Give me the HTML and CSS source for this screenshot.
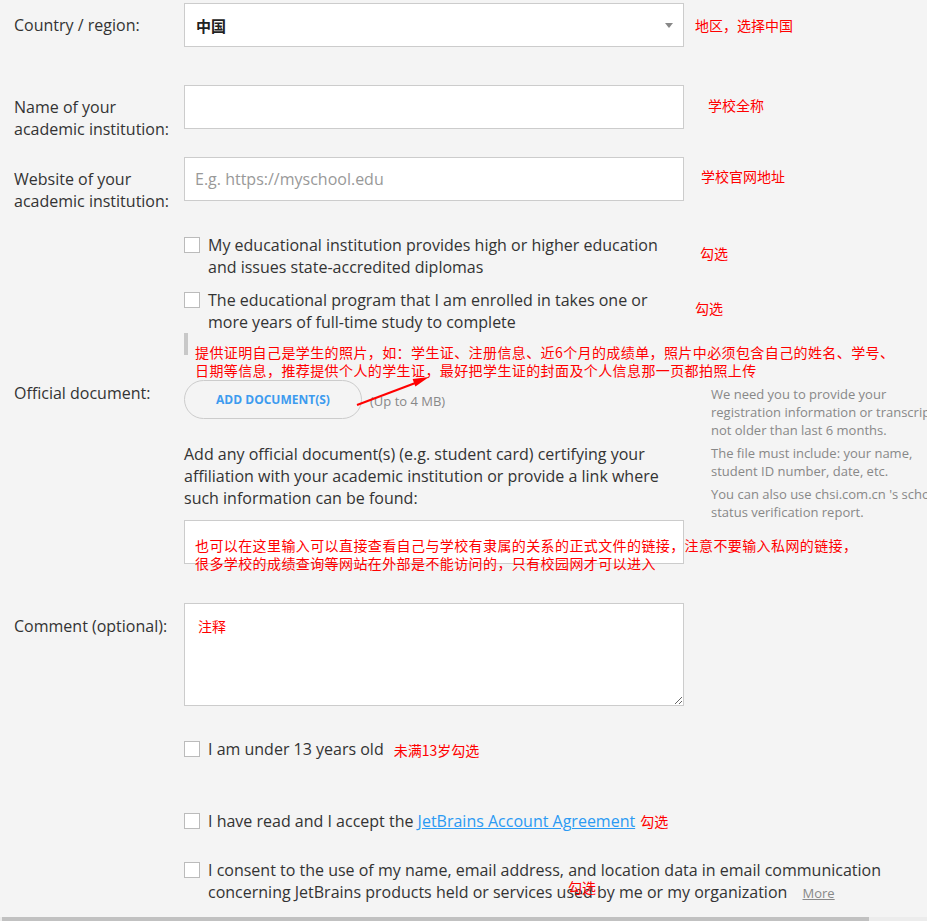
FILE: index.html
```html
<!DOCTYPE html>
<html lang="en">
<head>
    <meta charset="UTF-8">
    <meta name="viewport" content="width=device-width, initial-scale=1.0">
    <title>Student License Application</title>
    <link rel="stylesheet" href="styles.css">
</head>
<body>
    <div class="page">
        <div class="row row-country">
            <label class="row-label">Country / region:</label>
            <div class="field select">
                <span class="select-value">中国</span>
                <span class="select-arrow"></span>
            </div>
            <span class="note note-country">地区，选择中国</span>
        </div>

        <div class="row row-name">
            <label class="row-label">Name of your<br>academic institution:</label>
            <input class="field" type="text">
            <span class="note note-name">学校全称</span>
        </div>

        <div class="row row-site">
            <label class="row-label">Website of your<br>academic institution:</label>
            <input class="field" type="text" placeholder="E.g. https://myschool.edu">
            <span class="note note-site">学校官网地址</span>
        </div>

        <div class="row row-check1">
            <div></div>
            <div class="check">
                <span class="box"></span>
                <span class="check-text">My educational institution provides high or higher education and issues state-accredited diplomas</span>
            </div>
            <span class="note note-check1">勾选</span>
        </div>

        <div class="row row-check2">
            <div></div>
            <div class="check">
                <span class="box"></span>
                <span class="check-text">The educational program that I am enrolled in takes one or more years of full-time study to complete</span>
            </div>
            <span class="note note-check2">勾选</span>
        </div>

        <div class="row">
            <div></div>
            <div class="quote-bar"></div>
        </div>

        <div class="row row-doc">
            <label class="row-label">Official document:</label>
            <div class="doc-field">
                <div class="upload">
                    <button class="upload-btn" type="button">ADD DOCUMENT(S)</button>
                    <span class="upload-limit">(Up to 4 MB)</span>
                </div>
                <p class="doc-text">Add any official document(s) (e.g. student card) certifying your affiliation with your academic institution or provide a link where such information can be found:</p>
                <input class="field" type="text">
            </div>
            <div class="help">
                <p>We need you to provide your registration information or transcripts not older than last 6 months.</p>
                <p>The file must include: your name, student ID number, date, etc.</p>
                <p>You can also use chsi.com.cn 's school status verification report.</p>
            </div>
        </div>

        <div class="row row-comment">
            <label class="row-label">Comment (optional):</label>
            <textarea class="comment">注释</textarea>
        </div>

        <div class="row row-age">
            <div></div>
            <div class="check check-wide">
                <span class="box"></span>
                <span class="check-text">I am under 13 years old</span>
                <span class="note note-inline">未满13岁勾选</span>
            </div>
        </div>

        <div class="row row-agree">
            <div></div>
            <div class="check check-wide">
                <span class="box"></span>
                <span class="check-text">I have read and I accept the <a href="#">JetBrains Account Agreement</a></span>
                <span class="note note-inline note-agree">勾选</span>
            </div>
        </div>

        <div class="row row-consent">
            <div></div>
            <div class="check check-wide">
                <span class="box"></span>
                <span class="check-text consent-text">I consent to the use of my name, email address, and location data in email communication concerning JetBrains products held or services used by me or my organization <a class="more" href="#">More</a></span>
            </div>
        </div>

        <!-- red annotations drawn over the form -->
        <div class="note overlay note-photo">提供证明自己是学生的照片，如：学生证、注册信息、近6个月的成绩单，照片中必须包含自己的姓名、学号、<br>日期等信息，推荐提供个人的学生证，最好把学生证的封面及个人信息那一页都拍照上传</div>
        <svg class="overlay arrow" width="90" height="45" viewBox="0 0 90 45">
            <line x1="7" y1="37" x2="66" y2="14.7" stroke="#f00" stroke-width="2"/>
            <polygon points="79,9 65.4,18.4 62.6,11" fill="#f00"/>
        </svg>
        <div class="note overlay note-link">也可以在这里输入可以直接查看自己与学校有隶属的关系的正式文件的链接，注意不要输入私网的链接，<br>很多学校的成绩查询等网站在外部是不能访问的，只有校园网才可以进入</div>
        <div class="note overlay note-consent">勾选</div>

        <div class="scrollbar"><div class="scrollbar-thumb"></div></div>
    </div>
</body>
</html>
```

FILE: styles.css
```css
body {
    margin: 0;
    background: #f4f4f4;
    font-family: 'Open Sans', 'Noto Sans CJK SC', sans-serif;
    font-size: 16px;
    color: #333;
    overflow: hidden;
}
.page {
    position: relative;
    width: 927px;
    height: 921px;
    padding-left: 14px;
    box-sizing: border-box;
}
.row {
    display: grid;
    grid-template-columns: 170px 500px 1fr;
    align-items: start;
}
.row-label {
    padding-top: 11px;
    line-height: 22px;
}
.field {
    display: block;
    width: 500px;
    height: 44px;
    margin: 0;
    padding: 0 10px;
    border: 1px solid #ccc;
    background: #fff;
    box-sizing: border-box;
    font-family: 'Open Sans', sans-serif;
    font-size: 16px;
    color: #333;
    outline: none;
}
.field::placeholder {
    color: #999;
}
.select {
    display: flex;
    align-items: center;
    justify-content: space-between;
}
.select-value {
    font-family: 'Noto Sans CJK SC', sans-serif;
    font-weight: bold;
    font-size: 15px;
    color: #222;
    padding-left: 1px;
}
.select-arrow {
    width: 0;
    height: 0;
    border-left: 4px solid transparent;
    border-right: 4px solid transparent;
    border-top: 5px solid #888;
}
.note {
    color: #f00;
    font-family: 'Noto Sans CJK SC', sans-serif;
    font-size: 14px;
    line-height: 20px;
    white-space: nowrap;
}
.row-country {
    margin-top: 3px;
}
.note-country {
    padding: 12px 0 0 11px;
}
.row-name {
    margin-top: 38px;
}
.note-name {
    padding: 10px 0 0 24px;
}
.row-site {
    margin-top: 17px;
}
.note-site {
    padding: 9px 0 0 17px;
}

.check {
    display: flex;
    align-items: flex-start;
}
.box {
    flex: none;
    width: 16px;
    height: 16px;
    margin: 3px 8px 0 0;
    border: 1px solid #bbb;
    background: #fff;
    box-sizing: border-box;
}
.check-text {
    line-height: 22px;
}
.check-text a {
    color: #2b9af3;
}
.check-wide {
    grid-column: 2 / 4;
}
.row-check1 {
    margin-top: 22px;
}
.note-check1 {
    padding: 9px 0 0 16px;
}
.row-check2 {
    margin-top: 11px;
}
.note-check2 {
    padding: 9px 0 0 11px;
}
.quote-bar {
    width: 4px;
    height: 22px;
    background: #c8c8c8;
}

.row-doc {
    margin-top: 25px;
}
.row-doc .row-label {
    padding-top: 2px;
}
.upload {
    display: flex;
    align-items: center;
    gap: 8px;
}
.upload-btn {
    width: 178px;
    height: 39px;
    border: 1px solid #ccc;
    border-radius: 20px;
    background: transparent;
    font-family: 'Open Sans', sans-serif;
    font-weight: bold;
    font-size: 12px;
    color: #3d9bef;
    cursor: pointer;
}
.upload-limit {
    font-size: 13px;
    color: #888;
    padding-top: 3px;
}
.doc-text {
    margin: 24px 0 11px;
    line-height: 22px;
}
.help {
    width: 245px;
    padding: 5px 0 0 27px;
    font-size: 13px;
    line-height: 18px;
    color: #888;
}
.help p {
    margin: 0 0 5px;
}

.row-comment {
    margin-top: 39px;
}
.row-comment .row-label {
    padding-top: 12px;
}
.comment {
    display: block;
    width: 500px;
    height: 103px;
    margin: 0;
    padding: 12px 13px;
    border: 1px solid #ccc;
    background: #fff;
    box-sizing: border-box;
    font-family: 'Noto Sans CJK SC', sans-serif;
    font-size: 14px;
    line-height: 20px;
    color: #f00;
    outline: none;
}

.row-age {
    margin-top: 32px;
}
.note-inline {
    margin-left: 10px;
    padding-top: 2px;
}
.row-agree {
    margin-top: 50px;
}
.note-agree {
    margin-left: 5px;
    padding-top: 1px;
}
.row-consent {
    margin-top: 27px;
}
.consent-text {
    max-width: 690px;
}
.more {
    margin-left: 11px;
    font-size: 13px;
    color: #888 !important;
}

.overlay {
    position: absolute;
}
.note-photo {
    left: 195px;
    top: 340px;
    line-height: 18px;
    letter-spacing: 0.4px;
}
.arrow {
    left: 350px;
    top: 365px;
}
.note-link {
    left: 195px;
    top: 533px;
    line-height: 18px;
    letter-spacing: 0.4px;
}
.note-consent {
    left: 568px;
    top: 874px;
}
.scrollbar {
    position: fixed;
    left: 0;
    right: 0;
    bottom: 0;
    height: 4px;
    background: #ececec;
}
.scrollbar-thumb {
    margin-left: 2px;
    width: 867px;
    height: 4px;
    background: #c1c1c1;
}
```
